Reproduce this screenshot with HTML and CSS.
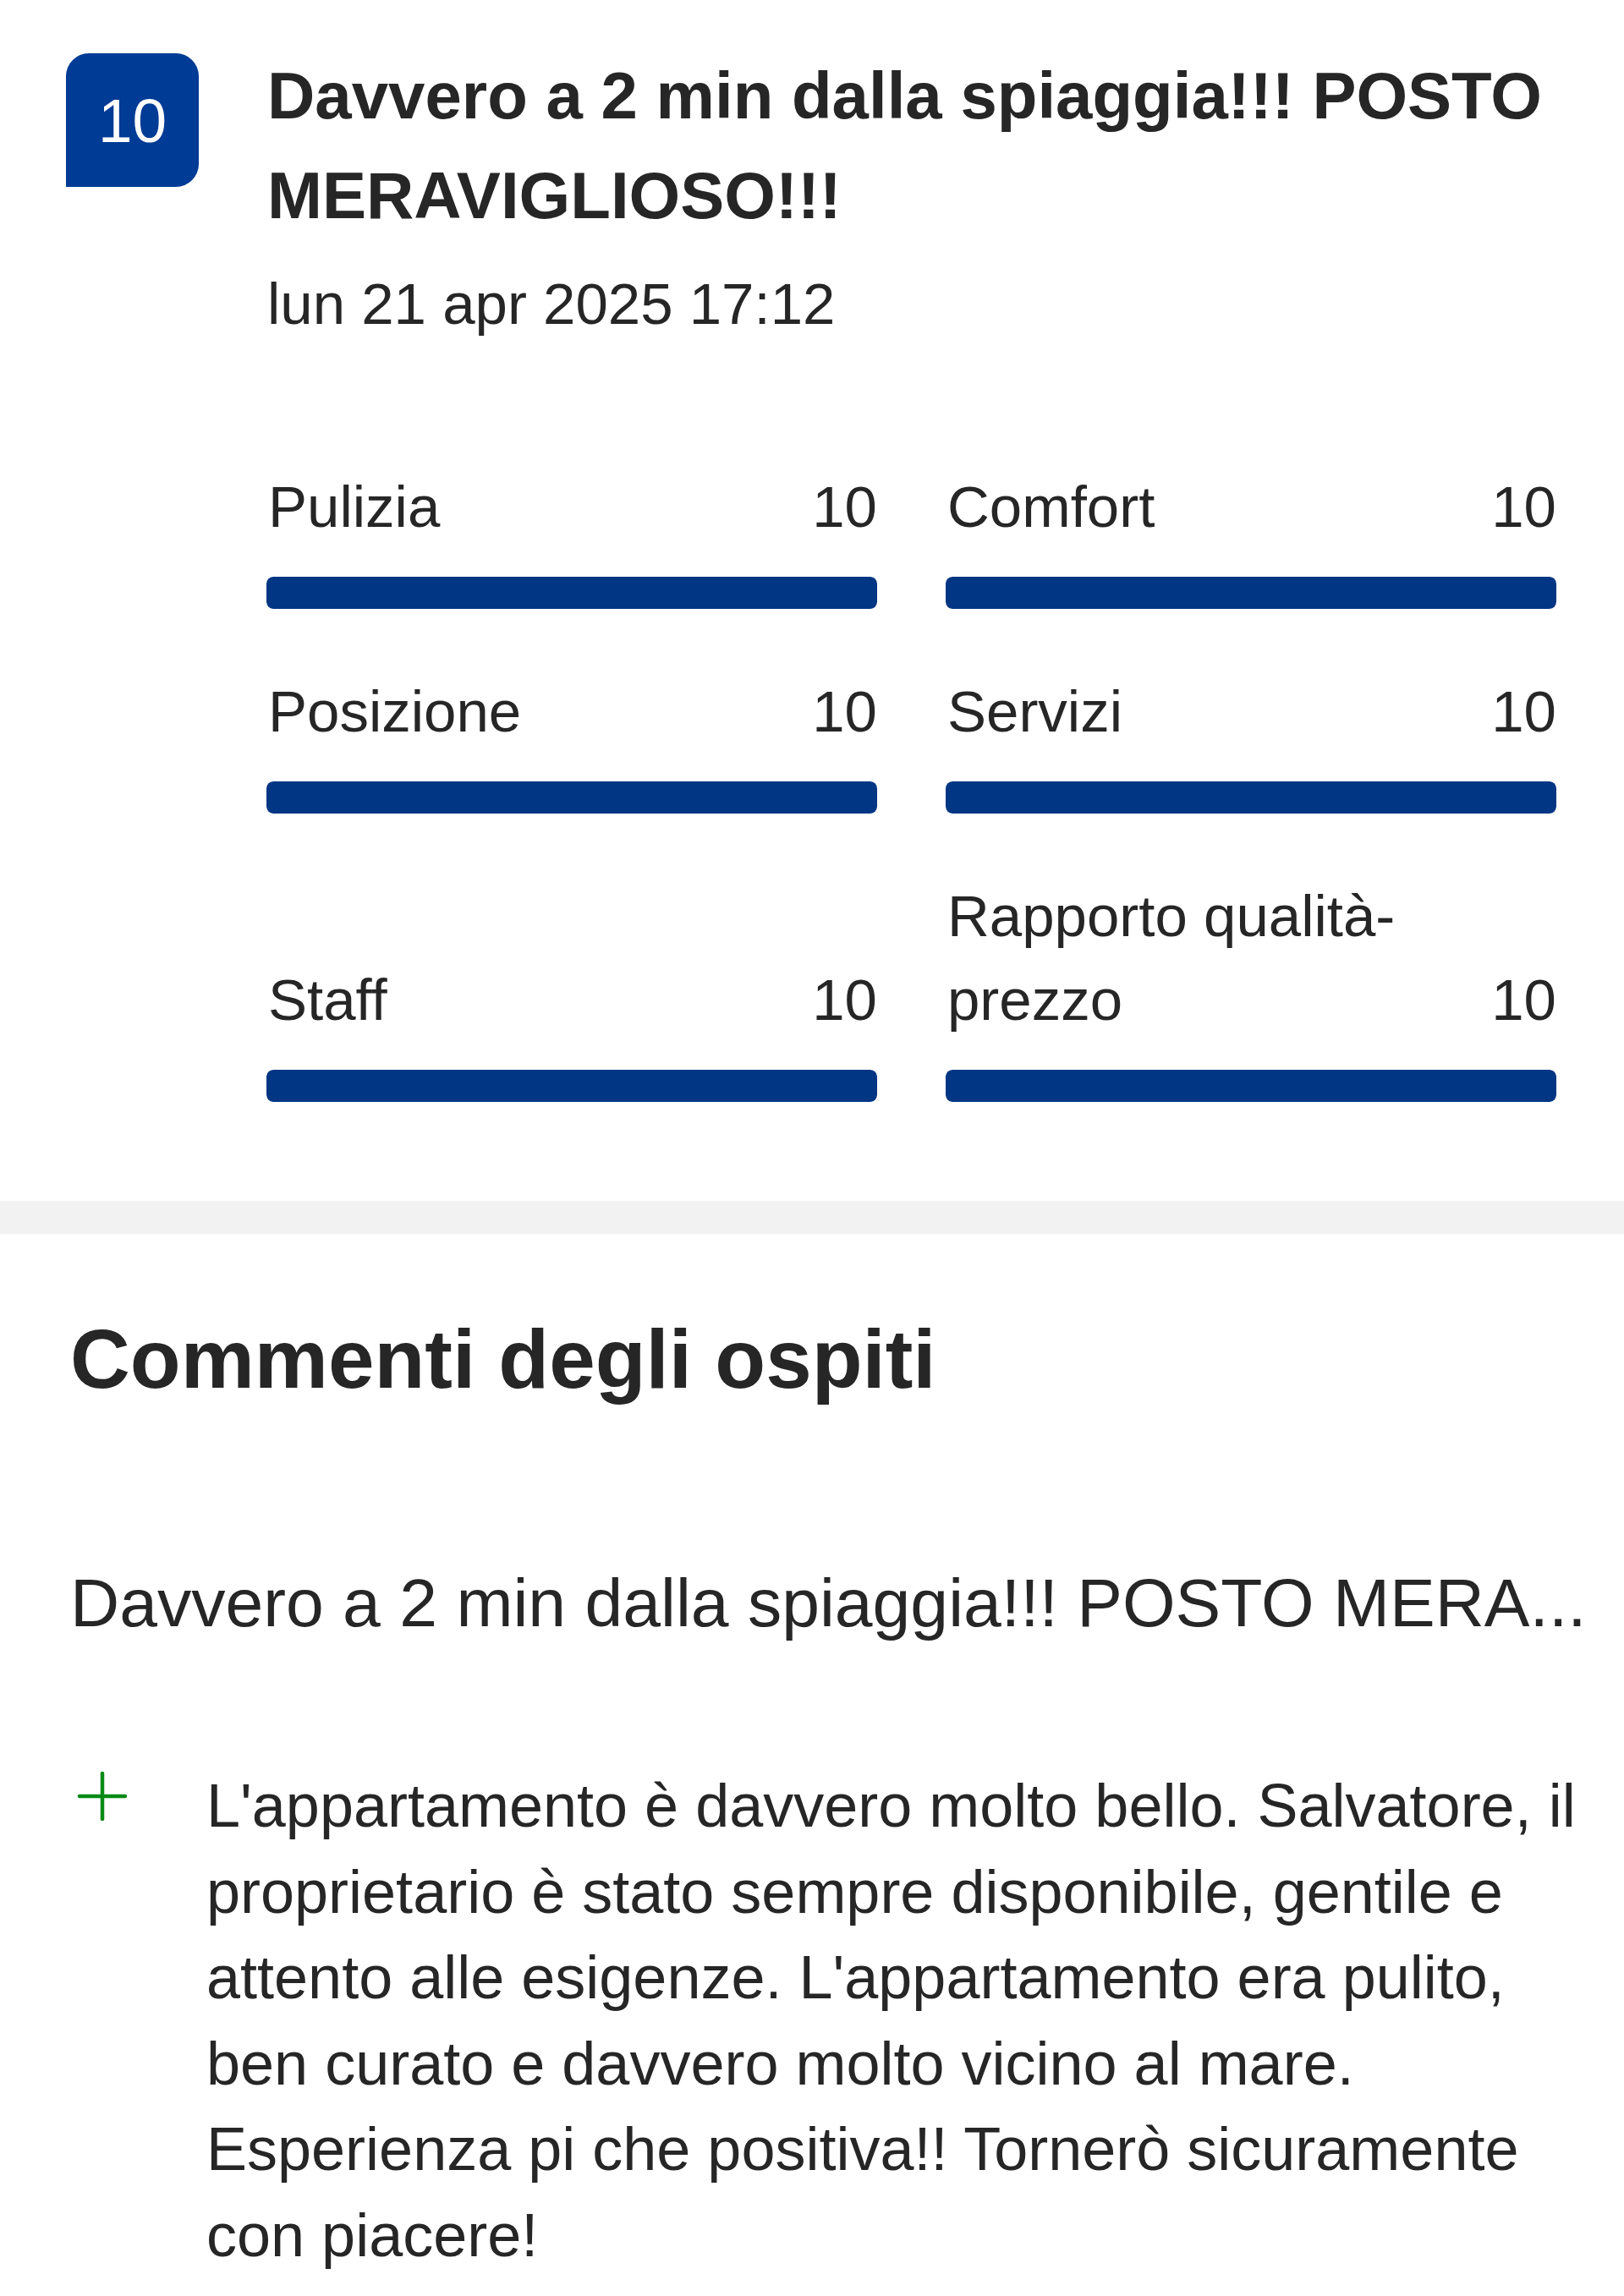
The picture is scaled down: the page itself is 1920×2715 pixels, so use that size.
FILE: index.html
```html
<!DOCTYPE html>
<html lang="it">
<head>
<meta charset="utf-8">
<title>Recensione</title>
<link rel="stylesheet" href="styles.css">
</head>
<body>
<main class="page">
  <section class="review">
    <header class="review-head">
      <div class="score-badge">10</div>
      <div class="head-text">
        <h1 class="review-title">Davvero a 2 min dalla spiaggia!!! POSTO MERAVIGLIOSO!!!</h1>
        <div class="review-date">lun 21 apr 2025 17:12</div>
      </div>
    </header>

    <div class="ratings">
      <div class="rating">
        <div class="rating-head"><span class="rating-label">Pulizia</span><span class="rating-value">10</span></div>
        <div class="rating-bar"><div class="rating-fill" style="width:100%"></div></div>
      </div>
      <div class="rating">
        <div class="rating-head"><span class="rating-label">Comfort</span><span class="rating-value">10</span></div>
        <div class="rating-bar"><div class="rating-fill" style="width:100%"></div></div>
      </div>
      <div class="rating">
        <div class="rating-head"><span class="rating-label">Posizione</span><span class="rating-value">10</span></div>
        <div class="rating-bar"><div class="rating-fill" style="width:100%"></div></div>
      </div>
      <div class="rating">
        <div class="rating-head"><span class="rating-label">Servizi</span><span class="rating-value">10</span></div>
        <div class="rating-bar"><div class="rating-fill" style="width:100%"></div></div>
      </div>
      <div class="rating">
        <div class="rating-head"><span class="rating-label">Staff</span><span class="rating-value">10</span></div>
        <div class="rating-bar"><div class="rating-fill" style="width:100%"></div></div>
      </div>
      <div class="rating">
        <div class="rating-head"><span class="rating-label">Rapporto qualità-prezzo</span><span class="rating-value">10</span></div>
        <div class="rating-bar"><div class="rating-fill" style="width:100%"></div></div>
      </div>
    </div>
  </section>

  <div class="divider"></div>

  <section class="comments">
    <h2 class="comments-title">Commenti degli ospiti</h2>
    <div class="comment-summary">Davvero a 2 min dalla spiaggia!!! POSTO MERA...</div>
    <div class="comment">
      <svg class="comment-icon" viewBox="0 0 60 60" width="60" height="60" aria-hidden="true">
        <path d="M30 3 V57 M3 30 H57" stroke="#078a17" stroke-width="4.5" stroke-linecap="round" fill="none"/>
      </svg>
      <p class="comment-text">L'appartamento è davvero molto bello. Salvatore, il proprietario è stato sempre disponibile, gentile e attento alle esigenze. L'appartamento era pulito, ben curato e davvero molto vicino al mare. Esperienza pi che positiva!! Tornerò sicuramente con piacere!</p>
    </div>
  </section>
</main>
</body>
</html>
```

FILE: styles.css
```css
html, body {
  margin: 0;
  padding: 0;
  background: #ffffff;
}

body {
  font-family: "Liberation Sans", Arial, "Helvetica Neue", sans-serif;
  color: #262626;
}

.page {
  width: 1920px;
  min-height: 2715px;
}

/* ---------- Review header ---------- */
.review-head {
  display: flex;
  align-items: flex-start;
  gap: 81px;
  padding: 54px 80px 0 78px;
}

.score-badge {
  flex: none;
  width: 157px;
  height: 158px;
  margin-top: 9px;
  background: #003b95;
  color: #ffffff;
  border-radius: 27px 27px 27px 0;
  display: flex;
  align-items: center;
  justify-content: center;
  font-size: 73px;
  line-height: 1;
}

.head-text {
  flex: 1;
  min-width: 0;
}

.review-title {
  margin: 0;
  font-size: 78px;
  font-weight: 700;
  line-height: 118px;
  color: #262626;
}

.review-date {
  margin-top: 20px;
  font-size: 69px;
  line-height: 99px;
  color: #262626;
}

/* ---------- Ratings ---------- */
.ratings {
  display: grid;
  grid-template-columns: 1fr 1fr;
  column-gap: 81px;
  row-gap: 72px;
  margin: 141px 80px 0 315px;
}

.rating {
  display: flex;
  flex-direction: column;
  justify-content: flex-end;
}

.rating-head {
  display: flex;
  justify-content: space-between;
  align-items: flex-end;
  gap: 24px;
  font-size: 69px;
  line-height: 99px;
  color: #262626;
  padding-left: 2px;
}

.rating-value {
  flex: none;
}

.rating-bar {
  margin-top: 33px;
  height: 38px;
  border-radius: 8px;
  background: #e6e6e6;
  overflow: hidden;
}

.rating-fill {
  height: 100%;
  background: #003683;
  border-radius: 8px;
}

/* ---------- Divider ---------- */
.divider {
  margin-top: 117px;
  height: 39px;
  background: #f2f2f2;
}

/* ---------- Comments ---------- */
.comments {
  padding: 89px 11px 0 83px;
}

.comments-title {
  margin: 0;
  font-size: 98px;
  font-weight: 700;
  line-height: 118px;
  color: #262626;
}

.comment-summary {
  margin-top: 181px;
  font-size: 80.5px;
  line-height: 96px;
  white-space: nowrap;
  overflow: hidden;
  color: #262626;
}

.comment {
  display: flex;
  align-items: flex-start;
  gap: 93px;
  margin-top: 142px;
  margin-left: 8px;
}

.comment-icon {
  flex: none;
  width: 60px;
  height: 60px;
  margin-top: 9px;
}

.comment-text {
  flex: 1;
  margin: 0;
  font-size: 72px;
  line-height: 101.5px;
  color: #262626;
}
```
